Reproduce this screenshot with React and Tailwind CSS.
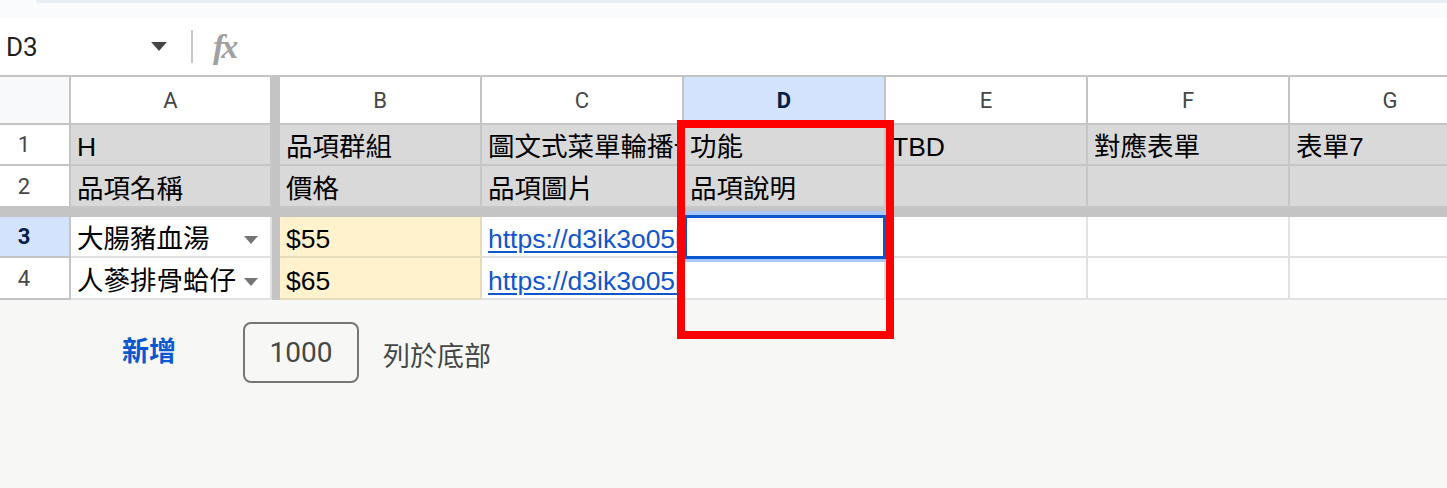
const COLS = ["B", "C", "D", "E", "F", "G"];

const rows = [
  { n: "1", h: "h-[41px]", head: true, cells: ["H", "品項群組", "圖文式菜單輪播卡片", "功能", "TBD", "對應表單", "表單7"] },
  { n: "2", h: "h-[42px]", head: true, cells: ["品項名稱", "價格", "品項圖片", "品項說明", "", "", ""] },
  { n: "3", h: "h-[41px]", active: true, cells: ["大腸豬血湯", "$55", "https://d3ik3o05lzqhfa", "", "", "", ""] },
  { n: "4", h: "h-[42px]", cells: ["人蔘排骨蛤仔", "$65", "https://d3ik3o05lzqhfa", "", "", "", ""] },
];

const Caret = ({ className }) => (
  <svg className={className} viewBox="0 0 14 8" fill="currentColor">
    <path d="M0 0h14L7 8z" />
  </svg>
);

const Cell = ({ row, col, value }) => {
  const base = "shrink-0 h-full flex items-end pb-[2px] pl-[6px] border-r-2 border-b-2 overflow-hidden whitespace-nowrap leading-[30px] text-[26.5px] text-black";
  if (row.head) {
    return <div className={`${base} bg-[#d9d9d9] border-[#c6c6c6] ${col === "A" ? "w-[201px]" : "w-[202px]"}`}>{value}</div>;
  }
  if (col === "A") {
    return (
      <div className={`${base} w-[201px] bg-white border-[#e1e1e1] justify-between pr-[12px]`}>
        <span>{value}</span>
        <Caret className="w-[14px] h-[8px] mb-[10px] text-[#757575]" />
      </div>
    );
  }
  if (col === "B") {
    return <div className={`${base} w-[202px] bg-[#fff2cc] border-[#e6dcbc]`}>{value}</div>;
  }
  if (col === "C") {
    return (
      <div className={`${base} w-[202px] bg-white border-[#e1e1e1]`}>
        <span className="text-[#1155cc] underline underline-offset-[3px]">{value}</span>
      </div>
    );
  }
  return <div className={`${base} w-[202px] bg-white border-[#e1e1e1]`}>{value}</div>;
};

export default function App() {
  return (
    <div className="w-[1447px] h-[488px] overflow-hidden bg-[#f7f8f6] font-['Liberation_Sans','Noto_Sans_CJK_TC',sans-serif]">
      {/* toolbar edge */}
      <div className="h-[18px] bg-[#f9fbfd]">
        <div className="h-[3px] ml-[36px] rounded-bl-[10px] bg-[#e9eef6]" />
      </div>

      {/* formula bar */}
      <div className="h-[57px] bg-white flex items-center font-['Roboto','Noto_Sans_CJK_TC',sans-serif]">
        <div className="w-[191px] flex items-center justify-between pl-[6px] pr-[24px]">
          <span className="text-[26px] leading-none text-[#1f1f1f]">D3</span>
          <Caret className="w-[16px] h-[9px] text-[#444746]" />
        </div>
        <div className="w-[2px] h-[33px] bg-[#c4c7c5]" />
        <span className="ml-[20px] font-['Liberation_Serif',serif] italic font-bold text-[34px] leading-none text-[#a0a0a0] tracking-[-3px]">
          fx
        </span>
      </div>

      {/* grid */}
      <div className="relative border-t-2 border-[#c4c4c4]">
        {/* column headers */}
        <div className="flex h-[48px] font-['Roboto',sans-serif] text-[22px] text-[#444746]">
          <div className="shrink-0 w-[71px] h-full bg-[#f8f9fa] border-r-2 border-b-2 border-[#c4c4c4]" />
          <div className="shrink-0 w-[201px] h-full flex items-center justify-center bg-white border-r-2 border-b-2 border-[#c4c4c4]">A</div>
          <div className="shrink-0 w-[8px] h-full bg-[#c4c4c4]" />
          {COLS.map((c) => (
            <div
              key={c}
              className={`shrink-0 w-[202px] h-full flex items-center justify-center border-r-2 border-b-2 border-[#c4c4c4] ${
                c === "D" ? "bg-[#d3e3fd] text-[#041e49] font-bold" : "bg-white"
              }`}
            >
              {c}
            </div>
          ))}
        </div>

        {rows.map((row) => (
          <div key={row.n}>
            {row.n === "3" && <div className="h-[9px] bg-[#c4c4c4]" />}
            <div className={`flex ${row.h}`}>
              <div
                className={`shrink-0 w-[71px] h-full flex items-center border-r-2 border-b-2 border-[#c4c4c4] font-['Roboto',sans-serif] text-[22px] ${
                  row.active ? "bg-[#d3e3fd] text-[#041e49] font-bold" : "bg-white text-[#444746]"
                }`}
              >
                <span className="w-[48px] text-center">{row.n}</span>
              </div>
              <Cell row={row} col="A" value={row.cells[0]} />
              <div className="shrink-0 w-[8px] h-full bg-[#c4c4c4]" />
              {COLS.map((c, i) => (
                <Cell key={c} row={row} col={c} value={row.cells[i + 1]} />
              ))}
            </div>
          </div>
        ))}

        {/* selection D3 */}
        <div className="absolute left-[684px] top-[134px] w-[202px] h-[51px] border-t-4 border-b-[3px] border-[#a8c7fa]">
          <div className="h-full border-[3px] border-[#0b57d0]" />
        </div>

        {/* annotation box */}
        <div className="absolute left-[677px] top-[43px] w-[217px] h-[219px] border-[8px] border-[#ff0000]" />
      </div>

      {/* add rows */}
      <div className="flex items-center h-[61px] mt-[22px] pl-[122px] font-['Roboto','Noto_Sans_CJK_TC',sans-serif]">
        <span className="text-[27px] font-bold text-[#0b57d0] leading-none">新增</span>
        <div className="ml-[67px] w-[116px] h-[61px] rounded-[8px] border-2 border-[#747775] flex items-center justify-center text-[28px] text-[#444746]">
          1000
        </div>
        <span className="ml-[24px] mt-[10px] text-[27px] text-[#444746] leading-none">列於底部</span>
      </div>
    </div>
  );
}
